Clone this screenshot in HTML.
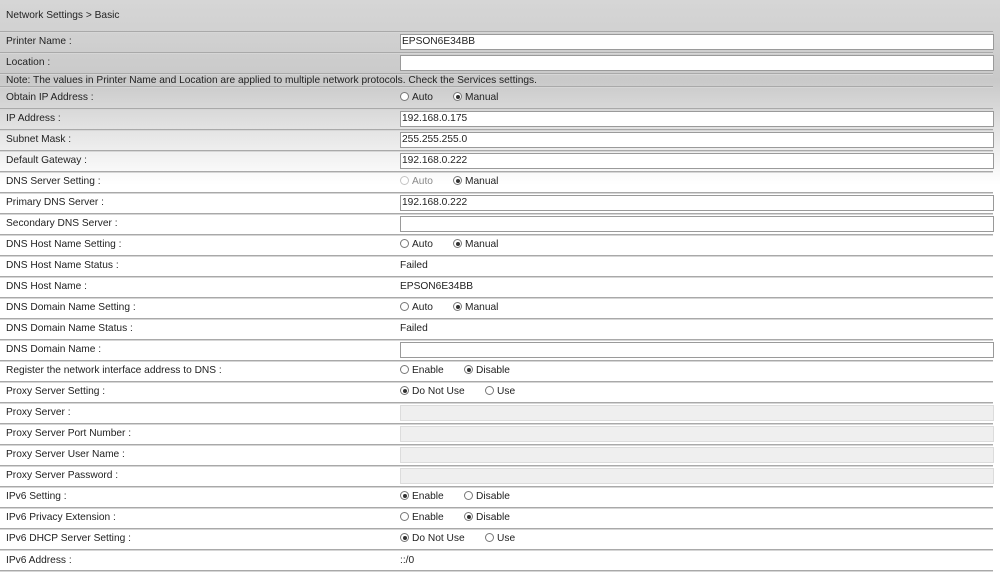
<!DOCTYPE html>
<html><head><style>
body{margin:0;width:1000px;height:574px;overflow:hidden;font-family:"Liberation Sans",Arial,sans-serif;font-size:10.2px;color:#222;
background:linear-gradient(180deg,#d6d6d6 0px,#d0d0d0 40px,#c9c9c9 80px,#dedede 120px,#f6f6f6 165px,#fff 185px);position:relative}
.t{position:absolute;left:6px;top:10px}
.l{position:absolute;left:0;width:993px;height:1px;background:#a9a9a9;border-bottom:1px solid #d6d6d6}
.k{position:absolute;left:6px;white-space:nowrap}
.v{position:absolute;left:400px;white-space:nowrap}
.in{position:absolute;left:400px;width:591px;height:14px;border:1px solid #9a9a9a;background:#fff;line-height:14px;padding-left:1px;box-sizing:content-box}
.dis{background:#efefef;border-color:#dcdcdc}
.r{display:inline-block;width:7px;height:7px;border:1px solid #777;border-radius:50%;vertical-align:-1px;margin-right:3px;position:relative;background:#fff}
.r.on::after{content:"";position:absolute;left:1.5px;top:1.5px;width:4px;height:4px;border-radius:50%;background:#333}
.r.g{border-color:#c4c4c4}
.g2{color:#888}
.b{position:absolute;white-space:nowrap}
</style></head><body>
<div class="t">Network Settings &gt; Basic</div>
<div class="l" style="top:31px"></div>
<div class="k" style="top:36px">Printer Name :</div><div class="in" style="top:34px">EPSON6E34BB</div>
<div class="l" style="top:52px"></div>
<div class="k" style="top:57px">Location :</div><div class="in" style="top:55px"></div>
<div class="l" style="top:73px"></div>
<div class="k" style="top:75px">Note: The values in Printer Name and Location are applied to multiple network protocols. Check the Services settings.</div>
<div class="l" style="top:86px"></div>
<div class="k" style="top:92px">Obtain IP Address :</div><div class="b" style="left:400px;top:92px"><span class="r"></span>Auto</div><div class="b" style="left:453px;top:92px"><span class="r on"></span>Manual</div>
<div class="l" style="top:108px"></div>
<div class="k" style="top:113px">IP Address :</div><div class="in" style="top:111px">192.168.0.175</div>
<div class="l" style="top:129px"></div>
<div class="k" style="top:134px">Subnet Mask :</div><div class="in" style="top:132px">255.255.255.0</div>
<div class="l" style="top:150px"></div>
<div class="k" style="top:155px">Default Gateway :</div><div class="in" style="top:153px">192.168.0.222</div>
<div class="l" style="top:171px"></div>
<div class="k" style="top:176px">DNS Server Setting :</div><div class="b" style="left:400px;top:176px"><span class="r g"></span><span class="g2">Auto</span></div><div class="b" style="left:453px;top:176px"><span class="r on"></span>Manual</div>
<div class="l" style="top:192px"></div>
<div class="k" style="top:197px">Primary DNS Server :</div><div class="in" style="top:195px">192.168.0.222</div>
<div class="l" style="top:213px"></div>
<div class="k" style="top:218px">Secondary DNS Server :</div><div class="in" style="top:216px"></div>
<div class="l" style="top:234px"></div>
<div class="k" style="top:239px">DNS Host Name Setting :</div><div class="b" style="left:400px;top:239px"><span class="r"></span>Auto</div><div class="b" style="left:453px;top:239px"><span class="r on"></span>Manual</div>
<div class="l" style="top:255px"></div>
<div class="k" style="top:260px">DNS Host Name Status :</div><div class="v" style="top:260px">Failed</div>
<div class="l" style="top:276px"></div>
<div class="k" style="top:281px">DNS Host Name :</div><div class="v" style="top:281px">EPSON6E34BB</div>
<div class="l" style="top:297px"></div>
<div class="k" style="top:302px">DNS Domain Name Setting :</div><div class="b" style="left:400px;top:302px"><span class="r"></span>Auto</div><div class="b" style="left:453px;top:302px"><span class="r on"></span>Manual</div>
<div class="l" style="top:318px"></div>
<div class="k" style="top:323px">DNS Domain Name Status :</div><div class="v" style="top:323px">Failed</div>
<div class="l" style="top:339px"></div>
<div class="k" style="top:344px">DNS Domain Name :</div><div class="in" style="top:342px"></div>
<div class="l" style="top:360px"></div>
<div class="k" style="top:365px">Register the network interface address to DNS :</div><div class="b" style="left:400px;top:365px"><span class="r"></span>Enable</div><div class="b" style="left:464px;top:365px"><span class="r on"></span>Disable</div>
<div class="l" style="top:381px"></div>
<div class="k" style="top:386px">Proxy Server Setting :</div><div class="b" style="left:400px;top:386px"><span class="r on"></span>Do Not Use</div><div class="b" style="left:485px;top:386px"><span class="r"></span>Use</div>
<div class="l" style="top:402px"></div>
<div class="k" style="top:407px">Proxy Server :</div><div class="in dis" style="top:405px"></div>
<div class="l" style="top:423px"></div>
<div class="k" style="top:428px">Proxy Server Port Number :</div><div class="in dis" style="top:426px"></div>
<div class="l" style="top:444px"></div>
<div class="k" style="top:449px">Proxy Server User Name :</div><div class="in dis" style="top:447px"></div>
<div class="l" style="top:465px"></div>
<div class="k" style="top:470px">Proxy Server Password :</div><div class="in dis" style="top:468px"></div>
<div class="l" style="top:486px"></div>
<div class="k" style="top:491px">IPv6 Setting :</div><div class="b" style="left:400px;top:491px"><span class="r on"></span>Enable</div><div class="b" style="left:464px;top:491px"><span class="r"></span>Disable</div>
<div class="l" style="top:507px"></div>
<div class="k" style="top:512px">IPv6 Privacy Extension :</div><div class="b" style="left:400px;top:512px"><span class="r"></span>Enable</div><div class="b" style="left:464px;top:512px"><span class="r on"></span>Disable</div>
<div class="l" style="top:528px"></div>
<div class="k" style="top:533px">IPv6 DHCP Server Setting :</div><div class="b" style="left:400px;top:533px"><span class="r on"></span>Do Not Use</div><div class="b" style="left:485px;top:533px"><span class="r"></span>Use</div>
<div class="l" style="top:549px"></div>
<div class="k" style="top:555px">IPv6 Address :</div><div class="v" style="top:555px">::/0</div>
<div class="l" style="top:570px"></div>
</body></html>
